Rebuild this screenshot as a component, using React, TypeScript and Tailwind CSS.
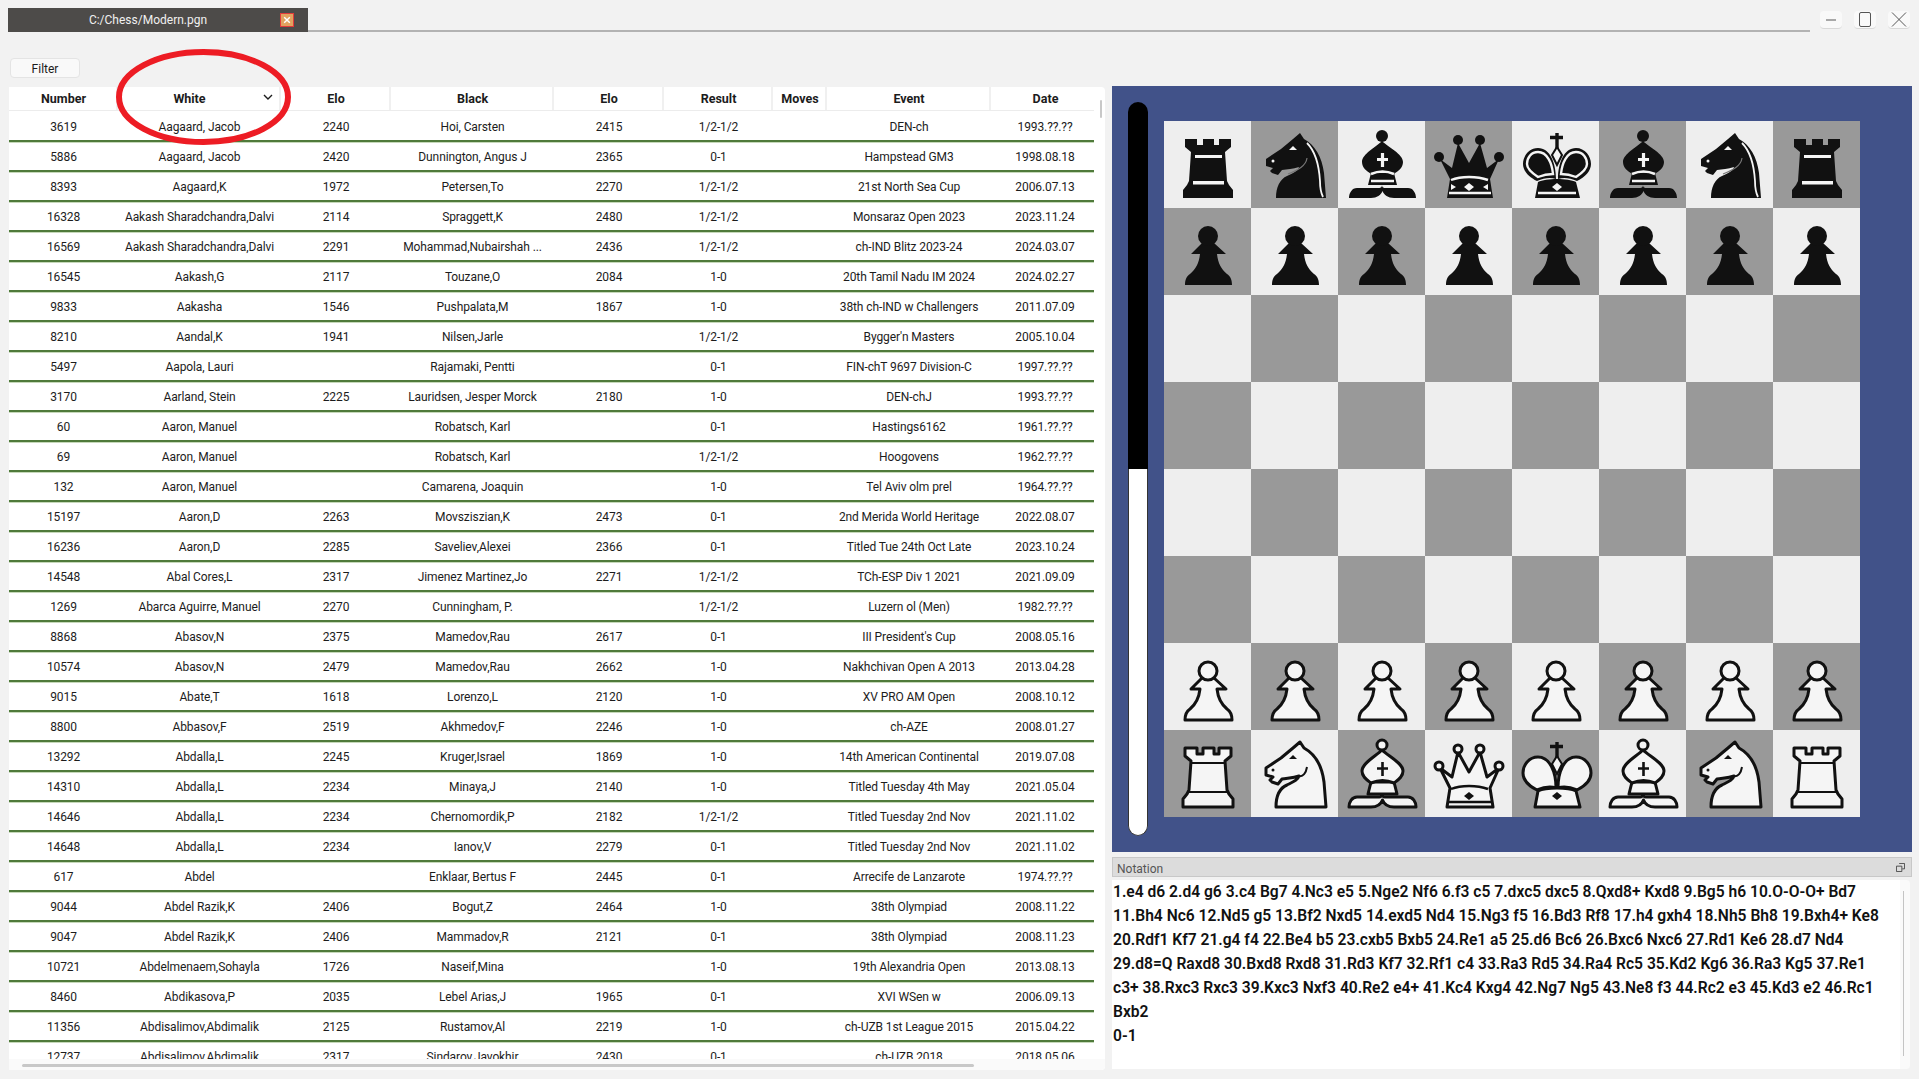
import React from 'react';

const ink = '#111111';
const paper = '#f5f5f5';

const rows = [
  ['3619', 'Aagaard, Jacob', '2240', 'Hoi, Carsten', '2415', '1/2-1/2', 'DEN-ch', '1993.??.??'],
  ['5886', 'Aagaard, Jacob', '2420', 'Dunnington, Angus J', '2365', '0-1', 'Hampstead GM3', '1998.08.18'],
  ['8393', 'Aagaard,K', '1972', 'Petersen,To', '2270', '1/2-1/2', '21st North Sea Cup', '2006.07.13'],
  ['16328', 'Aakash Sharadchandra,Dalvi', '2114', 'Spraggett,K', '2480', '1/2-1/2', 'Monsaraz Open 2023', '2023.11.24'],
  ['16569', 'Aakash Sharadchandra,Dalvi', '2291', 'Mohammad,Nubairshah ...', '2436', '1/2-1/2', 'ch-IND Blitz 2023-24', '2024.03.07'],
  ['16545', 'Aakash,G', '2117', 'Touzane,O', '2084', '1-0', '20th Tamil Nadu IM 2024', '2024.02.27'],
  ['9833', 'Aakasha', '1546', 'Pushpalata,M', '1867', '1-0', '38th ch-IND w Challengers', '2011.07.09'],
  ['8210', 'Aandal,K', '1941', 'Nilsen,Jarle', '', '1/2-1/2', "Bygger'n Masters", '2005.10.04'],
  ['5497', 'Aapola, Lauri', '', 'Rajamaki, Pentti', '', '0-1', 'FIN-chT 9697 Division-C', '1997.??.??'],
  ['3170', 'Aarland, Stein', '2225', 'Lauridsen, Jesper Morck', '2180', '1-0', 'DEN-chJ', '1993.??.??'],
  ['60', 'Aaron, Manuel', '', 'Robatsch, Karl', '', '0-1', 'Hastings6162', '1961.??.??'],
  ['69', 'Aaron, Manuel', '', 'Robatsch, Karl', '', '1/2-1/2', 'Hoogovens', '1962.??.??'],
  ['132', 'Aaron, Manuel', '', 'Camarena, Joaquin', '', '1-0', 'Tel Aviv olm prel', '1964.??.??'],
  ['15197', 'Aaron,D', '2263', 'Movsziszian,K', '2473', '0-1', '2nd Merida World Heritage', '2022.08.07'],
  ['16236', 'Aaron,D', '2285', 'Saveliev,Alexei', '2366', '0-1', 'Titled Tue 24th Oct Late', '2023.10.24'],
  ['14548', 'Abal Cores,L', '2317', 'Jimenez Martinez,Jo', '2271', '1/2-1/2', 'TCh-ESP Div 1 2021', '2021.09.09'],
  ['1269', 'Abarca Aguirre, Manuel', '2270', 'Cunningham, P.', '', '1/2-1/2', 'Luzern ol (Men)', '1982.??.??'],
  ['8868', 'Abasov,N', '2375', 'Mamedov,Rau', '2617', '0-1', "III President's Cup", '2008.05.16'],
  ['10574', 'Abasov,N', '2479', 'Mamedov,Rau', '2662', '1-0', 'Nakhchivan Open A 2013', '2013.04.28'],
  ['9015', 'Abate,T', '1618', 'Lorenzo,L', '2120', '1-0', 'XV PRO AM Open', '2008.10.12'],
  ['8800', 'Abbasov,F', '2519', 'Akhmedov,F', '2246', '1-0', 'ch-AZE', '2008.01.27'],
  ['13292', 'Abdalla,L', '2245', 'Kruger,Israel', '1869', '1-0', '14th American Continental', '2019.07.08'],
  ['14310', 'Abdalla,L', '2234', 'Minaya,J', '2140', '1-0', 'Titled Tuesday 4th May', '2021.05.04'],
  ['14646', 'Abdalla,L', '2234', 'Chernomordik,P', '2182', '1/2-1/2', 'Titled Tuesday 2nd Nov', '2021.11.02'],
  ['14648', 'Abdalla,L', '2234', 'Ianov,V', '2279', '0-1', 'Titled Tuesday 2nd Nov', '2021.11.02'],
  ['617', 'Abdel', '', 'Enklaar, Bertus F', '2445', '0-1', 'Arrecife de Lanzarote', '1974.??.??'],
  ['9044', 'Abdel Razik,K', '2406', 'Bogut,Z', '2464', '1-0', '38th Olympiad', '2008.11.22'],
  ['9047', 'Abdel Razik,K', '2406', 'Mammadov,R', '2121', '0-1', '38th Olympiad', '2008.11.23'],
  ['10721', 'Abdelmenaem,Sohayla', '1726', 'Naseif,Mina', '', '1-0', '19th Alexandria Open', '2013.08.13'],
  ['8460', 'Abdikasova,P', '2035', 'Lebel Arias,J', '1965', '0-1', 'XVI WSen w', '2006.09.13'],
  ['11356', 'Abdisalimov,Abdimalik', '2125', 'Rustamov,Al', '2219', '1-0', 'ch-UZB 1st League 2015', '2015.04.22'],
  ['12737', 'Abdisalimov,Abdimalik', '2317', 'Sindarov,Javokhir', '2430', '0-1', 'ch-UZB 2018', '2018.05.06'],
];

const notation = [
  '1.e4 d6 2.d4 g6 3.c4 Bg7 4.Nc3 e5 5.Nge2 Nf6 6.f3 c5 7.dxc5 dxc5 8.Qxd8+ Kxd8 9.Bg5 h6 10.O-O-O+ Bd7',
  '11.Bh4 Nc6 12.Nd5 g5 13.Bf2 Nxd5 14.exd5 Nd4 15.Ng3 f5 16.Bd3 Rf8 17.h4 gxh4 18.Nh5 Bh8 19.Bxh4+ Ke8',
  '20.Rdf1 Kf7 21.g4 f4 22.Be4 b5 23.cxb5 Bxb5 24.Re1 a5 25.d6 Bc6 26.Bxc6 Nxc6 27.Rd1 Ke6 28.d7 Nd4',
  '29.d8=Q Raxd8 30.Bxd8 Rxd8 31.Rd3 Kf7 32.Rf1 c4 33.Ra3 Rd5 34.Ra4 Rc5 35.Kd2 Kg6 36.Ra3 Kg5 37.Re1',
  'c3+ 38.Rxc3 Rxc3 39.Kxc3 Nxf3 40.Re2 e4+ 41.Kc4 Kxg4 42.Ng7 Ng5 43.Ne8 f3 44.Rc2 e3 45.Kd3 e2 46.Rc1',
  'Bxb2',
  '0-1',
];

const columns = [
  { label: 'Number', width: 'w-[109px]' },
  { label: 'White', width: 'w-[163px]' },
  { label: 'Elo', width: 'w-[110px]' },
  { label: 'Black', width: 'w-[163px]' },
  { label: 'Elo', width: 'w-[110px]' },
  { label: 'Result', width: 'w-[109px]' },
  { label: 'Moves', width: 'w-[54px]' },
  { label: 'Event', width: 'w-[164px]' },
  { label: 'Date', width: 'w-[109px]' },
];

function Piece({ type, dark }: { type: string; dark: boolean }) {
  const fill = dark ? ink : paper;
  const stroke = dark ? 'none' : ink;
  const detail = dark ? paper : ink;
  const body = { fill, stroke, strokeWidth: 3, strokeLinejoin: 'round' as const };

  return (
    <svg viewBox="0 0 87 87" className="w-[87px] h-[87px] block">
      {type === 'p' && (
        <>
          <path {...body} d="M38 35H50L62 46H53C54 55 57 61 63 66C66 68 68 71 68 77H21C21 71 23 68 26 66C32 61 35 55 36 46H27Z" />
          <circle {...body} cx="44" cy="28" r={dark ? 10 : 9} />
        </>
      )}
      {type === 'r' && (
        <>
          <path {...body} d="M21 18H33V24H39V18H50V24H55V18H67V26L61 31L63 60L65 64L69 69V77H19V69L23 64L25 60L27 31L21 26Z" />
          {dark ? (
            <>
              <rect x="31" y="34" width="27" height="3" fill={detail} />
              <rect x="29" y="60" width="31" height="3.5" fill={detail} />
            </>
          ) : (
            <path d="M27 33H61M25 62H63" stroke={detail} strokeWidth="2.200" fill="none" />
          )}
        </>
      )}
      {type === 'n' && (
        <>
          <path {...body} d="M49 12L53 18C64 24 71 36 73 52L75 77H25C25 66 29 58 36 55C42 52 47 50 48 46C42 48 36 48 31 49L27 54L21 52L19 50L22 47L15 45V38L30 28L42 18Z" />
          <path d="M38 29L42 25L46 29Z" fill={detail} />
          <circle cx="22" cy="40" r="1.500" fill={detail} />
          {dark && <path d="M56 22C64 30 68 44 69 60C69 66 70 72 72 76" stroke={detail} strokeWidth="1.800" fill="none" />}
          {dark && <path d="M56 37C55 45 47 49 37 53" stroke="#777777" strokeWidth="1.200" fill="none" />}
          {!dark && <path d="M56 37C55 43 52 47 48 46" stroke={detail} strokeWidth="2" fill="none" />}
        </>
      )}
      {type === 'b' && (
        <>
          <path {...body} d="M44 64C44 68 48 67 52 67H70C75 67 78 72 78 77H56C50 77 46 74 44.500 70C43 74 39 77 33 77H11C11 72 14 67 19 67H36C40 67 44 68 44 64Z" />
          <path {...body} d="M33 52L30 64H59L56 52Z" />
          <path {...body} d="M44 20C38 26 24 33 24 41C24 47 29 50 33 53C40 50 49 50 56 53C60 50 65 47 65 41C65 33 50 26 44 20Z" />
          <circle {...body} cx="44" cy="15" r={dark ? 6 : 5} />
          <path d="M44.500 32V46M39 38.500H50" stroke={detail} strokeWidth={dark ? 3.2 : 2.600} fill="none" />
          {dark && <path d="M33 53C40 50 49 50 56 53M33 60H56" stroke={detail} strokeWidth="2.600" fill="none" />}
        </>
      )}
      {type === 'q' && (
        <>
          <path {...body} d="M15 38L27 47L33 22L44 42L55 22L62 47L74 38L65 58L68 77H22L25 58Z" />
          <circle {...body} cx="14" cy="36" r={dark ? 5 : 4} />
          <circle {...body} cx="33" cy="19" r={dark ? 5 : 4} />
          <circle {...body} cx="55" cy="19" r={dark ? 5 : 4} />
          <circle {...body} cx="74" cy="36" r={dark ? 5 : 4} />
          <path d="M26 59C36 55 52 55 63 59M24 72H66" stroke={detail} strokeWidth="2.400" fill="none" />
          <path d="M44 62L49 66L44 70L39 66Z" fill={detail} />
          {dark && <path d="M26 63L31 66L26 69ZM63 63L58 66L63 69Z" fill={detail} />}
        </>
      )}
      {type === 'k' && (
        <>
          <path d="M45 12V28M38 16.500H51" stroke={ink} strokeWidth="3.400" fill="none" />
          <path fill={paper} stroke={ink} strokeWidth="2" d="M45 26L50 34L45 44L40 34Z" />
          <path {...body} d="M44 58C44 42 38 27 26 27C17 27 11 35 11 43C11 50 17 56 25 60C32 57 38 56 44 58Z" />
          <path {...body} d="M46 58C46 42 52 27 64 27C73 27 79 35 79 43C79 50 73 56 65 60C58 57 52 56 46 58Z" />
          <path {...body} d="M26 61C34 57 56 57 64 61L68 77H23Z" />
          <path d="M45 62L50 66L45 70L40 66Z" fill={detail} />
          {dark && (
            <>
              <path d="M41 53C40 42 35 31 26 31C19 31 15 37 15 43C15 48 20 52 26 56C31 54 36 53 41 53Z" stroke={paper} strokeWidth="2.400" fill="none" />
              <path d="M49 53C50 42 55 31 64 31C71 31 75 37 75 43C75 48 70 52 64 56C59 54 54 53 49 53Z" stroke={paper} strokeWidth="2.400" fill="none" />
              <path d="M26 72H64" stroke={paper} strokeWidth="2.400" fill="none" />
            </>
          )}
        </>
      )}
    </svg>
  );
}

const backRank = ['r', 'n', 'b', 'q', 'k', 'b', 'n', 'r'];

function pieceAt(rank: number, file: number) {
  if (rank === 0) return { type: backRank[file], dark: true };
  if (rank === 1) return { type: 'p', dark: true };
  if (rank === 6) return { type: 'p', dark: false };
  if (rank === 7) return { type: backRank[file], dark: false };
  return null;
}

function Board() {
  const squares = [];
  for (let rank = 0; rank < 8; rank++) {
    for (let file = 0; file < 8; file++) {
      const piece = pieceAt(rank, file);
      squares.push(
        <div key={`${rank}-${file}`} className={(rank + file) % 2 === 0 ? 'bg-[#eeeeee]' : 'bg-[#999999]'}>
          {piece && <Piece type={piece.type} dark={piece.dark} />}
        </div>
      );
    }
  }
  return <div className="grid grid-cols-[repeat(8,87px)] grid-rows-[repeat(8,87px)] ml-4 mt-[19px]">{squares}</div>;
}

export default function App() {
  return (
    <div className="relative w-full h-screen overflow-hidden bg-[#f2f2f2] font-['Roboto',sans-serif] text-[#1c1c1c]">
      <div className="flex items-start pl-2 pr-[9px] pt-2">
        <div className="relative w-[300px] h-6 bg-[#4d4b49] text-[#f0f0f0] text-[12px] flex items-center justify-center pr-[20px]">
          C:/Chess/Modern.pgn
          <div className="absolute left-[272px] top-[5px] w-[14px] h-[14px] bg-[#e2a25f] border border-[#e23b3b] text-white flex items-center justify-center">
            <svg viewBox="0 0 10 10" className="w-2 h-2">
              <path d="M1.500 1.500L8.500 8.500M8.500 1.500L1.500 8.500" stroke="#ffffff" strokeWidth="1.800" />
            </svg>
          </div>
        </div>
        <div className="flex-1 h-[2px] mt-[22px] bg-[#b3b3b3]" />
        <div className="flex gap-3 ml-[10px] mt-[3px]">
          <div className="w-[22px] h-[18px] rounded bg-[#f9f9f9] border-b border-[#d8d8d8] flex items-center justify-center">
            <div className="w-[10px] h-[2px] bg-[#a8a8a8]" />
          </div>
          <div className="w-[22px] h-[18px] rounded bg-[#f9f9f9] border-b border-[#d8d8d8] flex items-center justify-center">
            <div className="w-3 h-[15px] rounded-[2px] border border-[#555555]" />
          </div>
          <div className="w-[22px] h-[18px] rounded bg-[#f9f9f9] border-b border-[#d8d8d8] flex items-center justify-center">
            <svg viewBox="0 0 18 15" className="w-[18px] h-[15px]">
              <path d="M2 0.500L16 14.500M16 0.500L2 14.500" stroke="#444444" strokeWidth="0.900" />
            </svg>
          </div>
        </div>
      </div>

      <div className="flex">
        <div className="ml-[9px] w-[1096px]">
          <button className="block ml-px mt-[26px] w-[70px] h-5 pt-px rounded bg-[#f9f9f9] border border-[#e4e4e4] text-[12px]">Filter</button>
          <div className="relative mt-[9px] h-[983px] bg-white rounded-r overflow-hidden">
            <div className="flex h-[23px] w-[1085px] font-bold text-[12.500px] border-b border-[#ececec] box-content overflow-hidden">
              {columns.map((col, i) => (
                <div key={i} className={`${col.width} shrink-0 flex items-center justify-center relative pt-[2px] border-r-2 border-[#f0f0f0] ${i === 1 ? 'pr-[18px]' : 'pl-[2px]'}`}>
                  {col.label}
                  {i === 1 && (
                    <svg viewBox="0 0 10 6" className="absolute right-[6px] top-[7px] w-[10px] h-[6px]">
                      <path d="M1 1L5 5L9 1" stroke="#1c1c1c" strokeWidth="1.400" fill="none" />
                    </svg>
                  )}
                </div>
              ))}
            </div>
            <div className="h-[949px] w-[1085px] pt-px overflow-hidden">
              {rows.map((row, i) => (
                <div key={i} className="flex items-center h-[30px] pt-[2px] text-[12px] tracking-[-0.1px] border-b-2 border-[#4f7a3a] shadow-[0_1px_0_#c6d9ba] overflow-hidden">
                  <div className="w-[109px] shrink-0 text-center">{row[0]}</div>
                  <div className="w-[163px] shrink-0 text-center whitespace-nowrap">{row[1]}</div>
                  <div className="w-[110px] shrink-0 text-center">{row[2]}</div>
                  <div className="w-[163px] shrink-0 text-center whitespace-nowrap">{row[3]}</div>
                  <div className="w-[110px] shrink-0 text-center">{row[4]}</div>
                  <div className="w-[109px] shrink-0 text-center">{row[5]}</div>
                  <div className="w-[54px] shrink-0" />
                  <div className="w-[164px] shrink-0 text-center whitespace-nowrap">{row[6]}</div>
                  <div className="w-[103px] shrink-0 text-center whitespace-nowrap pl-[5px]">{row[7]}</div>
                </div>
              ))}
            </div>
            <div className="absolute left-0 right-0 bottom-0 h-[11px] bg-[#fafafa]" />
            <div className="absolute left-[13px] bottom-[3px] w-[952px] h-[3px] rounded-full bg-[#c8c8c8]" />
            <div className="absolute left-[1091px] top-[13px] w-[2px] h-[18px] rounded-full bg-[#c8c8c8]" />
          </div>
        </div>

        <div className="ml-[7px] w-[800px] pt-[54px]">
          <div className="flex h-[766px] bg-[#415289] pl-4 pt-4 items-start">
            <div className="w-5 h-[734px] rounded-full overflow-hidden flex flex-col">
              <div className="h-[367px] bg-black shrink-0" />
              <div className="flex-1 bg-white border-x border-b border-[#333333] rounded-b-full" />
            </div>
            <Board />
          </div>
          <div className="mt-[5px] h-5 pt-[3px] bg-[#dcdcdc] border border-[#c8c8c8] flex items-center justify-between pl-1 pr-[6px] text-[12px] text-[#555555]">
            Notation
            <svg viewBox="0 0 10 10" className="w-[9px] h-[9px] -mt-[3px]">
              <path d="M3.500 0.500H9.500V6.500H7M0.500 3.500H6.500V9.500H0.500Z" fill="none" stroke="#444444" strokeWidth="1" />
            </svg>
          </div>
          <div className="relative mt-[5px] h-[189px] w-[798px] bg-[#fafafa] rounded">
            <div className="h-full w-[788px] bg-white pl-px font-semibold text-[15.600px] leading-6 text-[#111111]">
              <div className="-mt-[2px]">
                {notation.map((line, i) => (
                  <div key={i} className="whitespace-nowrap">{line}</div>
                ))}
              </div>
            </div>
            <div className="absolute right-[6px] top-[11px] bottom-[13px] w-px bg-[#c4c4c4]" />
          </div>
        </div>
      </div>

      {/* red circle somebody drew on the screenshot */}
      <svg viewBox="0 0 175 96" className="absolute left-[116px] top-[49px] w-[175px] h-[96px] pointer-events-none">
        <ellipse cx="87.500" cy="48" rx="84.500" ry="45" fill="none" stroke="#ed1c24" strokeWidth="6" />
      </svg>
    </div>
  );
}
